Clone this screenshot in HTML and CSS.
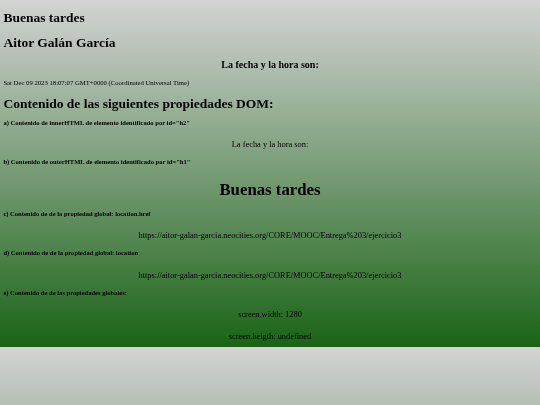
FILE: index.html
```html
<!DOCTYPE html>
<html lang="es">
<head>
    <meta charset="UTF-8">
    <meta name="viewport" content="width=device-width, initial-scale=1.0">
    <title>Ejercicio 3</title>
    <link rel="stylesheet" href="styles.css">
</head>
<body>
    <h1 class="title">Buenas tardes</h1>
    <h1 class="title">Aitor Galán García</h1>
    <h3 class="center">La fecha y la hora son:</h3>
    <p class="date">Sat Dec 09 2023 18:07:07 GMT+0000 (Coordinated Universal Time)</p>
    <h2 class="section">Contenido de las siguientes propiedades DOM:</h2>

    <h5>a) Contenido de innerHTML de elemento identificado por id="h2"</h5>
    <p class="value">La fecha y la hora son:</p>

    <h5>b) Contenido de outerHTML de elemento identificado por id="h1"</h5>
    <h1 class="big">Buenas tardes</h1>

    <h5>c) Contenido de de la propiedad global: location.href</h5>
    <p class="value">https://aitor-galan-garcia.neocities.org/CORE/MOOC/Entrega%203/ejercicio3</p>

    <h5>d) Contenido de de la propiedad global: location</h5>
    <p class="value">https://aitor-galan-garcia.neocities.org/CORE/MOOC/Entrega%203/ejercicio3</p>

    <h5>e) Contenido de de las propiedades globales:</h5>
    <p class="value">screen.width: 1280</p>
    <p class="value">screen.heigth: undefined</p>
</body>
</html>
```

FILE: styles.css
```css
* {
    margin: 0;
    padding: 0;
    box-sizing: border-box;
}

body {
    font-family: "Liberation Serif", "Times New Roman", serif;
    background: linear-gradient(lightgray, #1a6416);
    color: #000;
    padding: 0 3.4px;
    height: 347px;
    filter: blur(0.4px);
}

.title {
    font-size: 13.5px;
    line-height: 15px;
    padding-top: 10px;
}

.center {
    font-size: 10px;
    line-height: 12px;
    text-align: center;
    padding-top: 8.5px;
}

.date {
    font-size: 6.7px;
    line-height: 8px;
    padding-top: 8px;
}

.section {
    font-size: 13.5px;
    line-height: 15px;
    padding: 9px 0 0.5px;
}

h5 {
    font-size: 6.55px;
    line-height: 8px;
    padding: 8px 0 1.3px;
}

.value {
    font-size: 8.4px;
    line-height: 10px;
    text-align: center;
    padding-top: 12.2px;
}

.big {
    font-size: 16.8px;
    line-height: 20px;
    text-align: center;
    padding: 12px 0 2px;
}
```
